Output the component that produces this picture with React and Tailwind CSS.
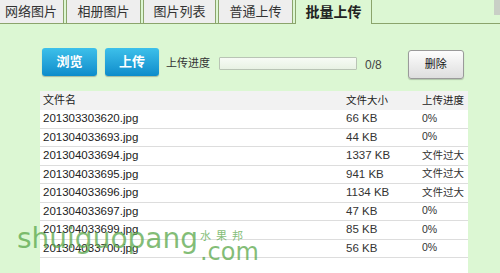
import React from "react";

const files = [
  { name: "201303303620.jpg", size: "66 KB", progress: "0%" },
  { name: "201304033693.jpg", size: "44 KB", progress: "0%" },
  { name: "201304033694.jpg", size: "1337 KB", progress: "文件过大" },
  { name: "201304033695.jpg", size: "941 KB", progress: "文件过大" },
  { name: "201304033696.jpg", size: "1134 KB", progress: "文件过大" },
  { name: "201304033697.jpg", size: "47 KB", progress: "0%" },
  { name: "201304033699.jpg", size: "85 KB", progress: "0%" },
  { name: "201304033700.jpg", size: "56 KB", progress: "0%" },
];

const tabs = [
  { label: "网络图片", w: "w-[66px] ml-[-2px]" },
  { label: "相册图片", w: "w-[75px]" },
  { label: "图片列表", w: "w-[73px]" },
  { label: "普通上传", w: "w-[75px]" },
];

export default function App() {
  return (
    <div className="relative w-[500px] h-[273px] overflow-hidden bg-[#dcf7d3] font-['Liberation_Sans','Noto_Sans_CJK_SC',sans-serif] text-[12px] text-[#222]">
      {/* --- Tabs --- */}
      <div className="flex items-end gap-[2px] h-[24px] border-b border-[#8ba46c]">
        {tabs.map((t) => (
          <div
            key={t.label}
            className={`${t.w} h-[23px] flex items-center justify-center bg-[#eeeeee] border-x border-[#8ba46c] text-[13px] text-[#333]`}
          >
            {t.label}
          </div>
        ))}
        <div className="w-[77px] h-[24px] -mb-px flex items-center justify-center bg-[#dcf7d3] border-x border-[#8ba46c] text-[14px] font-bold text-[#222]">
          批量上传
        </div>
      </div>
      <div className="absolute top-0 right-0 w-[6px] h-[15px] bg-[#c9cfc6]" />

      {/* --- Toolbar --- */}
      <div className="flex items-start pl-[42px] pt-[24px]">
        <button className="w-[55px] h-[28px] rounded-[3px] bg-gradient-to-b from-[#3cc0ea] to-[#0b8ccb] text-white font-bold text-[13px] shadow-[0_1px_1px_rgba(0,0,0,0.25)]">
          浏览
        </button>
        <button className="ml-[8px] w-[54px] h-[28px] rounded-[3px] bg-gradient-to-b from-[#3cc0ea] to-[#0b8ccb] text-white font-bold text-[13px] shadow-[0_1px_1px_rgba(0,0,0,0.25)]">
          上传
        </button>
        <span className="ml-[7px] mt-[7px] text-[11px] text-[#333]">上传进度</span>
        <div className="ml-[9px] mt-[9px] w-[138px] h-[13px] border border-[#b9c4b5] rounded-[1px] bg-gradient-to-b from-[#f7fbf5] to-[#e8f2e4]" />
        <span className="ml-[8px] mt-[8px] text-[12px] text-[#444]">0/8</span>
        <button className="ml-[26px] mt-[2px] w-[56px] h-[29px] rounded-[3px] border border-[#9a9a9a] bg-gradient-to-b from-[#fdfdfd] to-[#dedede] text-[11px] text-[#111] shadow-[0_1px_1px_rgba(0,0,0,0.2)]">
          删除
        </button>
      </div>

      {/* --- File table --- */}
      <div className="mt-[12px] ml-[40px] w-[428px] h-[200px] bg-white text-[11.5px] whitespace-nowrap">
        <div className="flex items-center h-[19px] bg-[#f2f2f2] text-[#222]">
          <span className="pl-[3px] w-[306px] text-[11px]">文件名</span>
          <span className="w-[76px] text-[10.5px]">文件大小</span>
          <span className="text-[10.5px]">上传进度</span>
        </div>
        {files.map((f) => (
          <div key={f.name} className="flex items-center h-[18.5px] border-b border-[#dddddd] text-[#222]">
            <span className="pl-[3px] w-[306px]">{f.name}</span>
            <span className="w-[76px] text-[#333]">{f.size}</span>
            <span className="text-[#333] text-[10.5px]">{f.progress}</span>
          </div>
        ))}
      </div>

      {/* --- Watermark --- */}
      <div className="absolute left-[17px] top-[223px] flex items-start text-[#5aa84a]/75 pointer-events-none">
        <span className="font-['DejaVu_Sans',sans-serif] text-[28px] leading-[32px]">shuiguopang</span>
        <div className="flex flex-col ml-[2px]">
          <span className="font-['Noto_Sans_CJK_SC',serif] text-[11px] leading-[12px] mt-[6px] tracking-[5px]">水果邦</span>
          <span className="font-['DejaVu_Sans',sans-serif] text-[24px] leading-[20px] mt-[1px]">.com</span>
        </div>
      </div>
    </div>
  );
}
